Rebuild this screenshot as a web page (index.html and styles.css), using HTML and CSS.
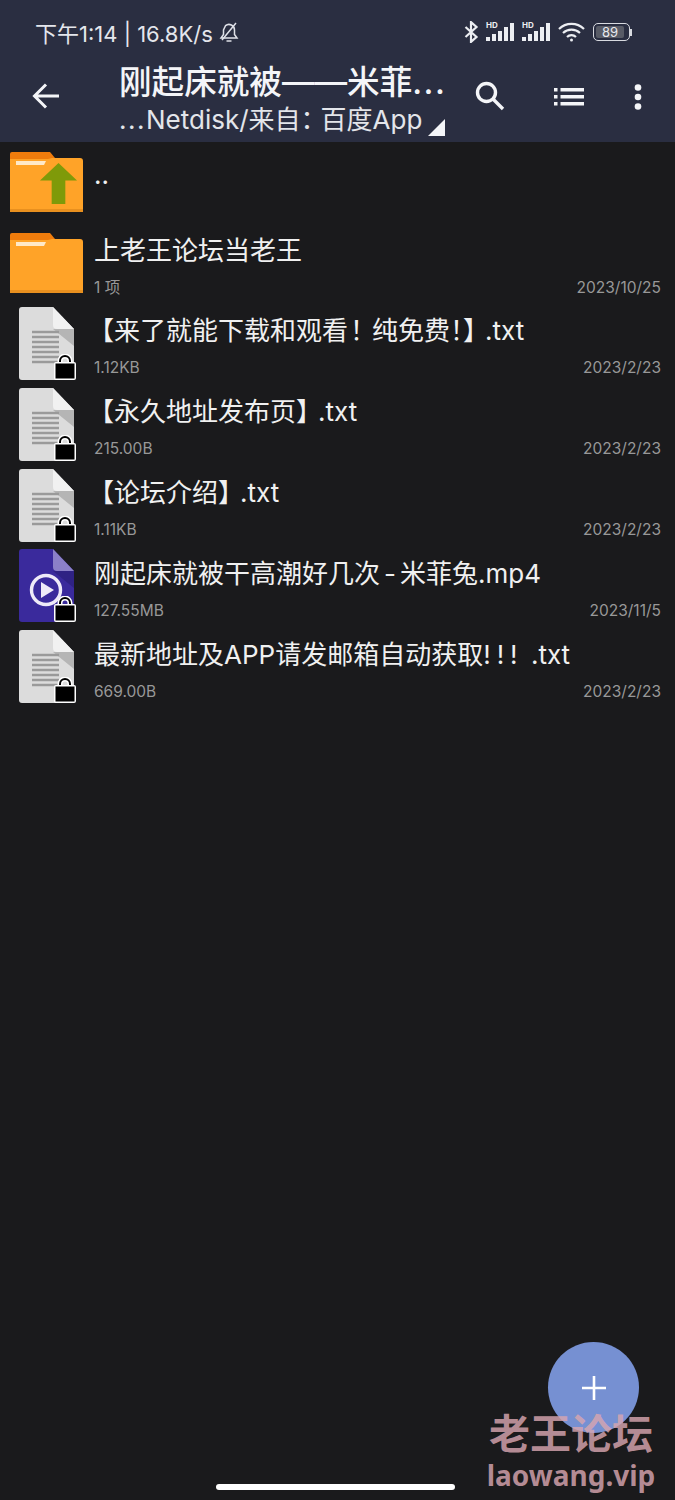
FILE: index.html
```html
<!DOCTYPE html>
<html lang="zh-CN">
<head>
  <meta charset="UTF-8">
  <title>文件列表</title>
  <link rel="stylesheet" href="styles.css">
</head>
<body>

  <svg class="defs" width="0" height="0">
    <symbol id="folder" viewBox="0 0 73 60">
      <path d="M2 0h38l5 6v10H0V2a2 2 0 0 1 2-2z" fill="#ef7c0c"/>
      <path d="M0 7h38l4-1h28a3 3 0 0 1 3 3v49a2 2 0 0 1-2 2H2a2 2 0 0 1-2-2z" fill="#ffa328"/>
      <rect y="57" width="73" height="3" fill="#e8901f"/>
      <path d="M6 9h30l-2 4H6z" fill="#ffe9c8"/>
    </symbol>
    <symbol id="txt" viewBox="0 0 56 73">
      <path d="M3 0h31l21 22v48a3 3 0 0 1-3 3H3a3 3 0 0 1-3-3V3a3 3 0 0 1 3-3z" fill="#dcdcdc"/>
      <path d="M34 0l21 22H38a4 4 0 0 1-4-4z" fill="#f1f1f1"/>
      <path d="M34 22h21v17z" fill="#b5b5b5"/>
      <path d="M13 25h27M13 30h27M13 35h27M13 40h27M13 45h27M13 50h27M13 55h27" stroke="#9a9a9a" stroke-width="2.6"/>
    </symbol>
    <symbol id="video" viewBox="0 0 56 73">
      <path d="M3 0h31l21 22v48a3 3 0 0 1-3 3H3a3 3 0 0 1-3-3V3a3 3 0 0 1 3-3z" fill="#3a2a9c"/>
      <path d="M34 0l21 22H38a4 4 0 0 1-4-4z" fill="#8b80c8"/>
      <path d="M34 22h21v17z" fill="#2f2284"/>
      <circle cx="27" cy="41" r="14.5" fill="none" stroke="#eeeaf8" stroke-width="3.4"/>
      <path d="M22 33l13 8-13 8z" fill="#eeeaf8"/>
    </symbol>
    <symbol id="lock" viewBox="0 0 22 26">
      <path d="M6 9V7a5 5 0 0 1 10 0v2" fill="none" stroke="#fff" stroke-width="5"/>
      <path d="M6 9V7a5 5 0 0 1 10 0v2" fill="none" stroke="#000" stroke-width="2"/>
      <rect x="0" y="8" width="22" height="18" rx="2" fill="#fff"/>
      <rect x="1.5" y="9.5" width="19" height="15" fill="#000"/>
    </symbol>
    <symbol id="bars" viewBox="0 0 29 18">
      <rect x="0" y="14" width="4" height="4" fill="#eceef2"/>
      <rect x="6" y="11" width="4" height="7" fill="#eceef2"/>
      <rect x="12" y="8" width="4" height="10" fill="#eceef2"/>
      <rect x="18" y="4" width="4" height="14" fill="#eceef2"/>
      <rect x="24" y="0" width="4" height="18" fill="#eceef2"/>
    </symbol>
  </svg>

  <div class="page">
    <header class="topbar">
      <div class="status">
        <div class="status-left">
          <span>下午1:14 | 16.8K/s</span>
          <svg class="bell" viewBox="0 0 22 22" fill="none" stroke="#dfe1e8" stroke-width="1.5">
            <path d="M3 17h16l-2.500-3.500V9a5.500 5.500 0 0 0-9-4.300L5.500 9v4.500z"/>
            <path d="M8.500 20h5M4 19L18 2"/>
          </svg>
        </div>
        <div class="status-right">
          <svg class="bt" viewBox="0 0 14 20" fill="none" stroke="#eceef2" stroke-width="2">
            <path d="M2 5.500l10 9-5 4.500V1l5 4.500-10 9"/>
          </svg>
          <span class="signal">
            <b class="hd">HD</b>
            <svg><use href="#bars"/></svg>
          </span>
          <span class="signal">
            <b class="hd">HD</b>
            <svg><use href="#bars"/></svg>
          </span>
          <svg class="wifi" viewBox="0 0 28 20" fill="none" stroke="#eceef2" stroke-width="2.200">
            <path d="M1 7a18 18 0 0 1 25 0M5 11a12.500 12.500 0 0 1 17 0M9 15a6.500 6.500 0 0 1 9 0"/>
            <circle cx="13.500" cy="18" r="1.500" fill="#eceef2" stroke="none"/>
          </svg>
          <div class="battery"><span class="battery-level">89</span></div>
          <i class="battery-tip"></i>
        </div>
      </div>
      <div class="toolbar">
        <svg class="back" viewBox="0 0 28 26" fill="none" stroke="#f4f5f8" stroke-width="3">
          <path d="M27 13H3M14 1.500L2.500 13 14 24.500"/>
        </svg>
        <div class="heading">
          <div class="heading-title">刚起床就被——米菲<span class="dots">...</span></div>
          <div class="heading-sub"><span class="dots">...</span>Netdisk/来自<span class="colon">：</span>百度App<i class="corner"></i></div>
        </div>
        <svg class="search" viewBox="0 0 30 30" fill="none" stroke="#f4f5f8" stroke-width="3.400">
          <circle cx="11.500" cy="11.500" r="9"/><path d="M18 18l10 10"/>
        </svg>
        <svg class="listview" viewBox="0 0 30 18" fill="#f4f5f8">
          <rect width="3.500" height="3.500"/><rect x="6.500" width="23.500" height="3.500"/>
          <rect y="7" width="3.500" height="3.500"/><rect x="6.500" y="7" width="23.500" height="3.500"/>
          <rect y="14" width="3.500" height="3.500"/><rect x="6.500" y="14" width="23.500" height="3.500"/>
        </svg>
        <svg class="more" viewBox="0 0 8 26" fill="#f4f5f8">
          <circle cx="4" cy="3.500" r="3.300"/><circle cx="4" cy="13" r="3.300"/><circle cx="4" cy="22.500" r="3.300"/>
        </svg>
      </div>
    </header>

    <main class="files">
      <div class="row">
        <div class="thumb">
          <svg class="ico-folder"><use href="#folder"/></svg>
          <svg class="up" viewBox="0 0 40 42"><path d="M20 0l19 18H27v24H13V18H1z" fill="#7f9a09"/></svg>
        </div>
        <div class="info">
          <div class="name name-up">..</div>
        </div>
      </div>
      <div class="row">
        <div class="thumb"><svg class="ico-folder"><use href="#folder"/></svg></div>
        <div class="info">
          <div class="name">上老王论坛当老王</div>
          <div class="meta"><span>1 项</span><span>2023/10/25</span></div>
        </div>
      </div>
      <div class="row">
        <div class="thumb">
          <svg class="ico-file"><use href="#txt"/></svg>
          <svg class="ico-lock"><use href="#lock"/></svg>
        </div>
        <div class="info">
          <div class="name"><span class="open">【</span>来了就能下载和观看<span class="excl">！</span>纯免费<span class="excl-end">！</span><span class="close">】</span>.txt</div>
          <div class="meta"><span>1.12KB</span><span>2023/2/23</span></div>
        </div>
      </div>
      <div class="row">
        <div class="thumb">
          <svg class="ico-file"><use href="#txt"/></svg>
          <svg class="ico-lock"><use href="#lock"/></svg>
        </div>
        <div class="info">
          <div class="name"><span class="open">【</span>永久地址发布页<span class="close">】</span>.txt</div>
          <div class="meta"><span>215.00B</span><span>2023/2/23</span></div>
        </div>
      </div>
      <div class="row">
        <div class="thumb">
          <svg class="ico-file"><use href="#txt"/></svg>
          <svg class="ico-lock"><use href="#lock"/></svg>
        </div>
        <div class="info">
          <div class="name"><span class="open">【</span>论坛介绍<span class="close">】</span>.txt</div>
          <div class="meta"><span>1.11KB</span><span>2023/2/23</span></div>
        </div>
      </div>
      <div class="row">
        <div class="thumb">
          <svg class="ico-file"><use href="#video"/></svg>
          <svg class="ico-lock"><use href="#lock"/></svg>
        </div>
        <div class="info">
          <div class="name">刚起床就被干高潮好几次<span class="dash">-</span>米菲兔.mp4</div>
          <div class="meta"><span>127.55MB</span><span>2023/11/5</span></div>
        </div>
      </div>
      <div class="row">
        <div class="thumb">
          <svg class="ico-file"><use href="#txt"/></svg>
          <svg class="ico-lock"><use href="#lock"/></svg>
        </div>
        <div class="info">
          <div class="name">最新地址及APP请发邮箱自动获取<span class="bangs">!!!</span> .txt</div>
          <div class="meta"><span>669.00B</span><span>2023/2/23</span></div>
        </div>
      </div>
    </main>

    <div class="fab">
      <svg viewBox="0 0 24 24" stroke="#fff" stroke-width="2.600"><path d="M12 0v24M0 12h24"/></svg>
    </div>
    <div class="watermark">
      <div class="wm-cn">老王论坛</div>
      <div class="wm-en">laowang.vip</div>
    </div>
    <div class="home-bar"></div>
  </div>

</body>
</html>
```

FILE: styles.css
```css
* {
  box-sizing: border-box;
}
body {
  margin: 0;
  background-color: #1a1a1c;
  font-family: Inter, "Noto Sans CJK SC", sans-serif;
}
.defs {
  position: absolute;
}
.page {
  position: relative;
  width: 675px;
  height: 1500px;
  overflow: hidden;
}

/* top area */
.topbar {
  height: 142px;
  background-color: #2a2e41;
  color: #f4f5f8;
}
.status {
  height: 62px;
  padding: 2px 46px 0 35px;
  display: flex;
  justify-content: space-between;
  align-items: center;
}
.status-left {
  display: flex;
  align-items: center;
  gap: 5px;
  font-size: 22px;
  color: #e4e6ec;
}
.bell {
  width: 22px;
  height: 22px;
}
.status-right {
  display: flex;
  align-items: center;
  gap: 7px;
}
.bt {
  width: 16px;
  height: 22px;
}
.signal {
  position: relative;
  display: block;
  width: 29px;
  height: 18px;
}
.signal svg {
  display: block;
  width: 29px;
  height: 18px;
}
.hd {
  position: absolute;
  left: 0;
  top: -2px;
  font-size: 8px;
  line-height: 9px;
  color: #eceef2;
  background-color: #2a2e41;
  padding-right: 1px;
}
.wifi {
  width: 28px;
  height: 20px;
}
.battery {
  width: 37px;
  height: 18px;
  margin-right: -7px;
  padding: 2px;
  border: 1.500px solid #d8dae0;
  border-radius: 5px;
  display: flex;
}
.battery-level {
  width: 90%;
  background-color: #585b66;
  border-radius: 2px;
  font-size: 13px;
  line-height: 12px;
  text-align: center;
  color: #e8e9ee;
}
.battery-tip {
  width: 2px;
  height: 7px;
  background-color: #d8dae0;
  margin-right: -3px;
}

.toolbar {
  height: 80px;
  padding: 0 32px;
  display: flex;
  align-items: center;
}
.back {
  width: 28px;
  height: 26px;
  margin-top: -12px;
  flex: none;
}
.heading {
  margin-left: 59px;
  width: 356px;
  flex: none;
  margin-top: -6px;
}
.heading-title {
  font-size: 32.600px;
  font-weight: 500;
  line-height: 40px;
  white-space: nowrap;
}
.heading-sub {
  position: relative;
  font-size: 26px;
  line-height: 34px;
  color: #e3e5ea;
  white-space: nowrap;
  padding-top: 1px;
}
.dots {
  letter-spacing: 1.500px;
}
.colon {
  letter-spacing: -6px;
}
.corner {
  position: absolute;
  left: 309px;
  top: 17px;
  border-left: 17px solid transparent;
  border-bottom: 17px solid #f4f5f8;
}
.search {
  width: 30px;
  height: 30px;
  margin-top: -12px;
  flex: none;
}
.listview {
  width: 30px;
  height: 18px;
  margin-left: 49px;
  margin-top: -10px;
  flex: none;
}
.more {
  width: 8px;
  height: 26px;
  margin-left: 50px;
  margin-top: -10px;
  flex: none;
}

/* file rows */
.files {
  margin-top: -0.500px;
}
.row {
  height: 80.800px;
  padding: 0 14px 0 10px;
  display: flex;
  align-items: center;
}
.thumb {
  position: relative;
  width: 73px;
  height: 73px;
  flex: none;
}
.ico-folder {
  position: absolute;
  left: 0;
  top: 7px;
  width: 73px;
  height: 60px;
}
.up {
  position: absolute;
  left: 29px;
  top: 18px;
  width: 39px;
  height: 41px;
}
.ico-file {
  position: absolute;
  left: 9px;
  top: 0;
  width: 56px;
  height: 73px;
}
.ico-lock {
  position: absolute;
  left: 44px;
  top: 47px;
  width: 22px;
  height: 26px;
}
.info {
  flex: 1;
  margin-left: 11px;
  min-width: 0;
  padding-top: 6px;
}
.name {
  font-size: 26px;
  line-height: 36px;
  color: #f0f0f0;
  white-space: nowrap;
}
/* punctuation sits tighter than the font's full-width boxes */
.open {
  margin-left: -6px;
}
.close {
  letter-spacing: -4px;
}
.excl {
  margin-left: 2px;
  letter-spacing: -4px;
}
.excl-end {
  letter-spacing: -13px;
}
.dash {
  margin: 0 4px;
}
.bangs {
  letter-spacing: 6px;
}
.name-up {
  margin-top: -20px;
}
.meta {
  display: flex;
  justify-content: space-between;
  margin-top: 8px;
  font-size: 15.500px;
  line-height: 22px;
  color: #989898;
}

/* floating things */
.fab {
  position: absolute;
  left: 548px;
  top: 1342px;
  width: 91px;
  height: 91px;
  border-radius: 50%;
  background-color: #7690d2;
  display: flex;
  align-items: center;
  justify-content: center;
}
.fab svg {
  width: 24px;
  height: 24px;
}
.watermark {
  position: absolute;
  left: 486px;
  top: 1411px;
  width: 170px;
  text-align: center;
  color: rgba(216, 166, 176, 0.82);
  font-weight: 700;
}
.wm-cn {
  font-size: 41px;
  line-height: 46px;
}
.wm-en {
  font-size: 28px;
  line-height: 32px;
  margin-top: 2px;
  font-family: "Noto Sans", sans-serif;
  white-space: nowrap;
}
.home-bar {
  position: absolute;
  left: 216px;
  top: 1484px;
  width: 239px;
  height: 6px;
  border-radius: 3px;
  background-color: #fff;
}
```
